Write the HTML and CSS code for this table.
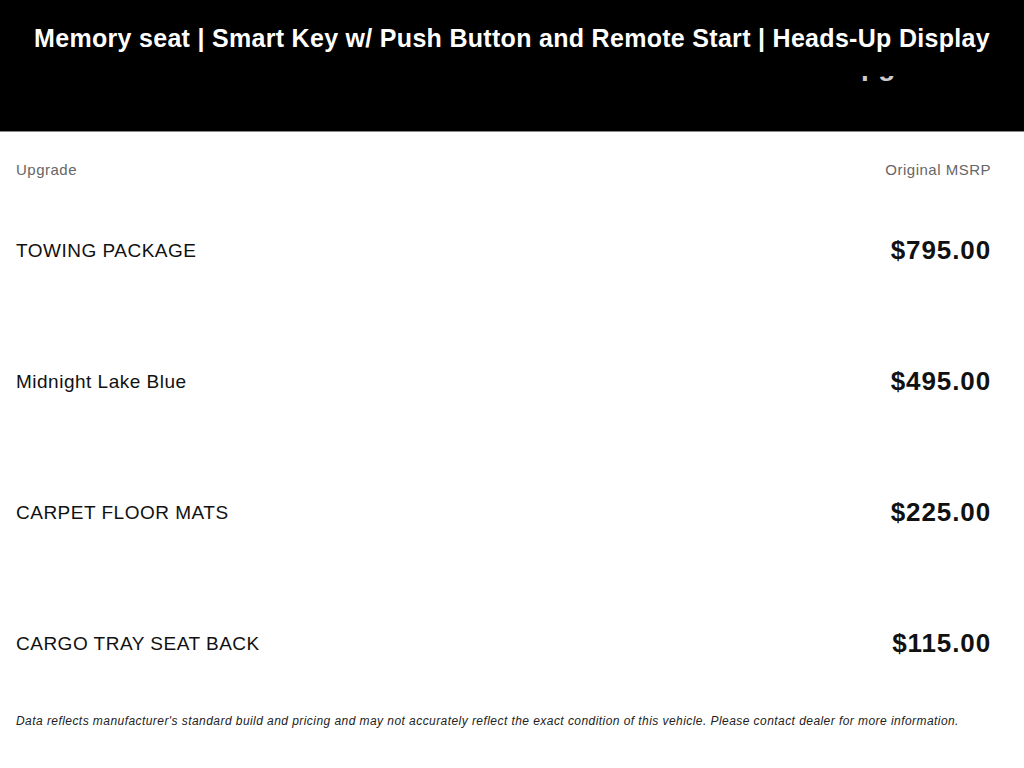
FILE: index.html
```html
<!DOCTYPE html>
<html>
<head>
<meta charset="utf-8">
<link rel="stylesheet" href="styles.css">
</head>
<body>
<header class="hero">
  <h1 class="hero-title">Memory seat | Smart Key w/ Push Button and Remote Start | Heads-Up Display</h1>
  <div class="hero-clip"><span class="hero-sub">Installed Upgrades</span></div>
</header>
<main class="table">
  <div class="table-head">
    <span>Upgrade</span>
    <span>Original MSRP</span>
  </div>
  <div class="row"><span class="name">TOWING PACKAGE</span><span class="price">$795.00</span></div>
  <div class="row"><span class="name">Midnight Lake Blue</span><span class="price">$495.00</span></div>
  <div class="row"><span class="name">CARPET FLOOR MATS</span><span class="price">$225.00</span></div>
  <div class="row"><span class="name">CARGO TRAY SEAT BACK</span><span class="price">$115.00</span></div>
  <p class="note">Data reflects manufacturer's standard build and pricing and may not accurately reflect the exact condition of this vehicle. Please contact dealer for more information.</p>
</main>
</body>
</html>
```
FILE: styles.css
```css
html, body {
  margin: 0;
  padding: 0;
  background: #fff;
  font-family: "Liberation Sans", Arial, sans-serif;
}
.hero {
  background: #000;
  height: 132px;
  border-bottom: 1px solid #888;
  box-sizing: border-box;
  display: flex;
  flex-direction: column;
  align-items: center;
  padding-top: 24px;
}
.hero-title {
  margin: 0;
  color: #fff;
  font-size: 25px;
  letter-spacing: 0.3px;
  font-weight: bold;
  line-height: 28px;
  white-space: nowrap;
}
.hero-clip {
  align-self: flex-end;
  margin-right: 54px;
  margin-top: 24px;
  height: 7px;
  overflow: hidden;
  opacity: 0.8;
}
.hero-sub {
  display: block;
  color: #fff;
  font-size: 28px;
  font-weight: bold;
  line-height: 28px;
  margin-top: -24px;
}
.table {
  padding: 0 33px 0 16px;
}
.table-head {
  display: flex;
  justify-content: space-between;
  color: #666;
  font-size: 15px;
  letter-spacing: 0.5px;
  padding-top: 29px;
  height: 24px;
}
.row {
  display: flex;
  justify-content: space-between;
  align-items: center;
  height: 131px;
}
.name {
  font-size: 19px;
  letter-spacing: 0.5px;
  color: #111;
}
.price {
  font-size: 26px;
  letter-spacing: 0.9px;
  font-weight: bold;
  color: #111;
}
.note {
  margin: 5px 0 0;
  font-size: 12px;
  letter-spacing: 0.44px;
  font-style: italic;
  color: #222;
}
```
